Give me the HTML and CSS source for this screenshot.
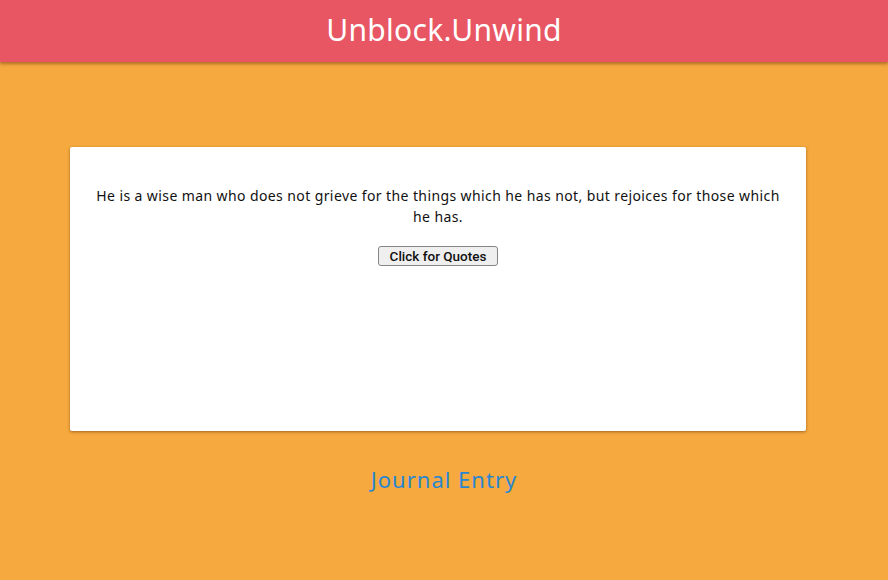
FILE: index.html
```html
<!DOCTYPE html>
<html>
<head>
<meta charset="utf-8">
<link rel="stylesheet" href="styles.css">
</head>
<body>
<header class="topbar">
  <h1 class="title">Unblock.Unwind</h1>
</header>
<main class="content">
  <section class="card">
    <p class="quote">He is a wise man who does not grieve for the things which he has not, but rejoices for those which he has.</p>
    <button class="quote-btn">Click for Quotes</button>
  </section>
  <a class="journal" href="#">Journal Entry</a>
</main>
</body>
</html>
```
FILE: styles.css
```css
html, body {
  margin: 0;
  padding: 0;
}
body {
  background: #f5a93e;
  font-family: "Noto Sans", "DejaVu Sans", sans-serif;
  height: 580px;
  overflow: hidden;
}
.topbar {
  background: #e85664;
  height: 62px;
  box-sizing: border-box;
  padding-bottom: 4px;
  display: flex;
  align-items: center;
  justify-content: center;
  box-shadow: 0 2px 3px rgba(120, 60, 20, 0.55);
  position: relative;
}
.title {
  margin: 0;
  color: #fff;
  font-weight: 400;
  font-size: 30px;
  letter-spacing: 0.3px;
}
.content {
  display: flex;
  flex-direction: column;
  align-items: center;
}
.card {
  align-self: flex-start;
  margin: 85px 0 0 70px;
  width: 736px;
  height: 284px;
  box-sizing: border-box;
  background: #fff;
  border-radius: 2px;
  box-shadow: 0 1px 3px rgba(90, 50, 10, 0.55);
  padding: 38px 24px 0;
  display: flex;
  flex-direction: column;
  align-items: center;
}
.quote {
  margin: 0 0 19px;
  text-align: center;
  font-size: 14px;
  line-height: 21px;
  letter-spacing: 0.4px;
  color: #111;
}
.quote-btn {
  font-family: Roboto, "Liberation Sans", Arial, sans-serif;
  font-size: 13.5px;
  font-weight: 500;
  color: #111;
  background: #efefef;
  border: 1px solid #858585;
  border-radius: 3px;
  padding: 0 8px;
  width: 120px;
  height: 20px;
}
.journal {
  margin-top: 33px;
  color: #2b86d0;
  font-size: 22px;
  letter-spacing: 1px;
  text-decoration: none;
}
```
